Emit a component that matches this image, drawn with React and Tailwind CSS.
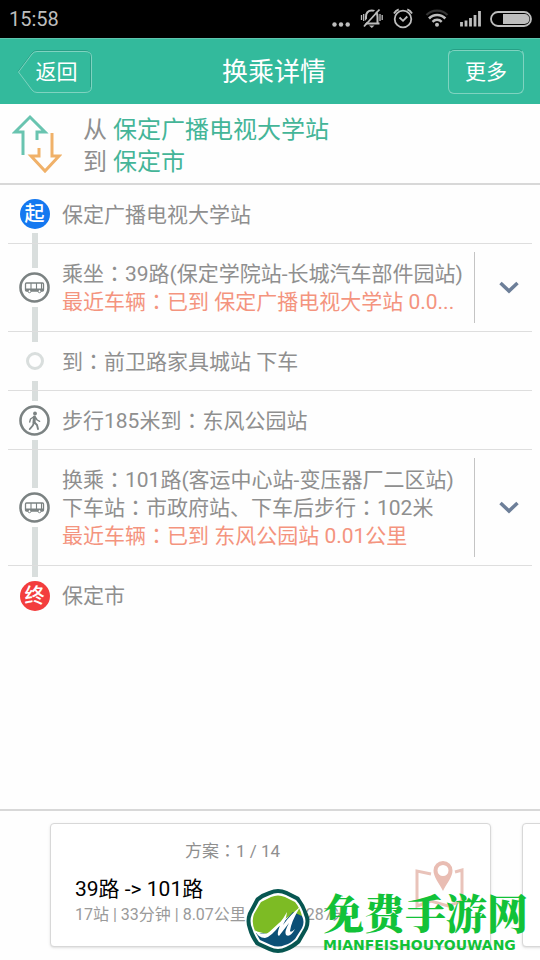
import React, { useState } from 'react'

const route = {
  from: '保定广播电视大学站',
  to: '保定市',
}

const steps = [
  { kind: 'start', lines: ['保定广播电视大学站'] },
  {
    kind: 'bus',
    lines: ['乘坐：39路(保定学院站-长城汽车部件园站)'],
    live: '最近车辆：已到 保定广播电视大学站 0.0...',
    height: 'h-[88px]',
    expandable: true,
  },
  { kind: 'stop', lines: ['到：前卫路家具城站 下车'] },
  { kind: 'walk', lines: ['步行185米到：东风公园站'] },
  {
    kind: 'bus',
    lines: ['换乘：101路(客运中心站-变压器厂二区站)', '下车站：市政府站、下车后步行：102米'],
    live: '最近车辆：已到 东风公园站 0.01公里',
    height: 'h-[116px]',
    expandable: true,
  },
  { kind: 'end', lines: ['保定市'] },
]

// Full-width colons sit in the middle of their cell only in the TC face
function Label({ children }) {
  return children.split(/(：)/).map((part, i) =>
    part === '：'
      ? <span key={i} className="leading-none font-['Noto_Sans_CJK_TC',sans-serif]">：</span>
      : part
  )
}

function StatusBar() {
  return (
    <div className="h-[38px] bg-black text-[#bdbdbd] flex items-center justify-between pl-[9px] pr-2">
      <span className="text-[20px] leading-6">15:58</span>
      <svg width="202" height="28" viewBox="330 5 202 28" fill="none" stroke="currentColor" strokeWidth="1.8" aria-hidden="true">
        <g fill="currentColor" stroke="none">
          <circle cx="334.5" cy="24.5" r="2.2"/>
          <circle cx="341" cy="24.5" r="2.2"/>
          <circle cx="347.7" cy="24.5" r="2.2"/>
        </g>
        {/* muted bell */}
        <path d="M363.500 23.500h16M366 23v-6c0-4 2.300-6.500 5.800-6.500s5.700 2.500 5.700 6.500v6" strokeWidth="2"/>
        <path d="M378 8.500L362.500 25" stroke="#000" strokeWidth="2"/>
        <path d="M379.500 9.500L364 26.500"/>
        <path d="M369 25.500h5.500l-2.700 2.500z" fill="currentColor" stroke="none"/>
        <path d="M361.500 15v5M363.700 14v7M380 14v7M382.200 15v5" strokeWidth="1.3"/>
        {/* alarm */}
        <circle cx="403" cy="19" r="8.3"/>
        <path d="M399.500 17.500l3.500 3.300 4.300-4.300"/>
        <path d="M394 13.500c1-2 2.700-3.500 4.700-4.200M412 13.500c-1-2-2.700-3.500-4.700-4.200"/>
        {/* wifi */}
        <path d="M426.500 15c5.500-5.800 15.500-5.800 21 0" stroke="#333" strokeWidth="2.2"/>
        <path d="M429 18.500c4.300-4.700 12-4.700 16.300 0" strokeWidth="2.6"/>
        <path d="M432.500 21.800c2.600-2.700 6.600-2.700 9.200 0" strokeWidth="2.4"/>
        <circle cx="437" cy="24.7" r="2" fill="currentColor" stroke="none"/>
        {/* signal */}
        <path d="M461.500 26.500v-4.500M466 26.500v-6M470.500 26.500v-8.500M475 26.500v-11.500M479.500 26.500v-15.500" strokeWidth="2.8"/>
        {/* battery */}
        <rect x="491" y="12" width="40" height="14" rx="7"/>
        <path d="M503 14h21.500a5 5 0 0 1 0 10H503z" fill="currentColor" stroke="none"/>
      </svg>
    </div>
  )
}

function TopBar() {
  return (
    <header className="h-[66px] bg-[#33ba9c] border-t border-[#5ec5ae] text-white flex items-center pl-[17px] pr-4">
      <button className="relative w-[75px] h-[45px] pl-1 text-[21px] leading-6">
        <svg className="absolute inset-0" width="75" height="45" viewBox="0 0 75 45" fill="none" aria-hidden="true">
          <path d="M1 22.500L15 4Q17 1.500 20 1.500H68Q73.500 1.500 73.500 7V38" stroke="#27a086"/>
          <path d="M1.500 23L15 41Q17 43.500 20 43.500H68Q74.500 43.500 74.500 38V8Q74.500 2.500 68 2.500H20Q17 2.500 15 5Z" stroke="#7fd3c0"/>
        </svg>
        返回
      </button>
      <h1 className="flex-1 text-center pl-2 text-[26px] leading-8">换乘详情</h1>
      <button className="w-[76px] h-[45px] rounded-md border border-[#7fd3c0] border-t-[#27a086] shadow-[inset_0_1px_0_#7fd3c0] text-[21px] leading-6">
        更多
      </button>
    </header>
  )
}

function SwapArrows() {
  return (
    <svg width="50" height="60" viewBox="0 0 50 60" fill="none" strokeWidth="3" aria-hidden="true">
      <path d="M11 41V18H3L18 3L33 18H25V26" stroke="#69c4b0"/>
      <path d="M40 19V42H47L33 57L19 42H27V34" stroke="#f0b169"/>
    </svg>
  )
}

function BusIcon() {
  return (
    <svg width="31" height="31" viewBox="0 0 31 31" fill="none" stroke="#7b8282" aria-hidden="true">
      <circle cx="15.5" cy="15.5" r="14" strokeWidth="2.6"/>
      <rect x="6.5" y="11" width="18" height="8" rx="1" strokeWidth="1.3"/>
      <path d="M12 11v6M17.500 11v6M22.500 11v6" strokeWidth="1.1"/>
      <path d="M6.500 17.700h18" strokeWidth="2.4"/>
      <circle cx="10.5" cy="19.2" r="1.5" fill="#fff"/>
      <circle cx="20.5" cy="19.2" r="1.5" fill="#fff"/>
    </svg>
  )
}

function WalkIcon() {
  return (
    <svg width="31" height="31" viewBox="0 0 31 31" fill="none" stroke="#7b8282" strokeLinecap="round" strokeLinejoin="round" aria-hidden="true">
      <circle cx="15.5" cy="15.5" r="14" strokeWidth="2.6"/>
      <circle cx="16" cy="8.5" r="1.9" fill="#7b8282" stroke="none"/>
      <path d="M15.500 12l-.5 5.500" strokeWidth="3"/>
      <path d="M14.500 12l-3 2-.8 3M16.500 12.500l1.700 2.500 2.500 1.300" strokeWidth="1.4"/>
      <path d="M15 17.500l-1.200 3-3 3.500M15.500 17.500l2.500 2.500 1 4" strokeWidth="1.9"/>
    </svg>
  )
}

function StepMarker({ kind }) {
  if (kind === 'bus') return <BusIcon/>
  if (kind === 'walk') return <WalkIcon/>
  if (kind === 'stop') {
    return (
      <span className="size-[31px] flex items-center justify-center">
        <span className="size-[18px] rounded-full border-[3px] border-[#d9dedd]"/>
      </span>
    )
  }
  return (
    <span className={`size-[30px] rounded-full flex items-center justify-center text-white text-[20px] leading-5 font-medium ${kind === 'start' ? 'bg-[#1478f0]' : 'bg-[#f33d3d]'}`}>
      {kind === 'start' ? '起' : '终'}
    </span>
  )
}

function Step({ step, first, last }) {
  const [open, setOpen] = useState(false)
  const bar = 'w-[6px] flex-1'

  return (
    <li className={`flex gap-3 pl-[11px] ${step.height || 'h-[59px]'} ${last ? '' : 'border-b border-[#dedede]'}`}>
      <div className="w-[31px] shrink-0 flex flex-col items-center gap-1">
        <span className={`${bar} ${first ? '' : 'bg-[#d9dedd]'}`}/>
        <StepMarker kind={step.kind}/>
        <span className={`${bar} ${last ? '' : 'bg-[#d9dedd]'}`}/>
      </div>
      <div className="flex-1 min-w-0 self-center pt-px text-[21px] leading-7 text-[#8f8f8f] whitespace-nowrap">
        {step.lines.map(line => (
          <p key={line}><Label>{line}</Label></p>
        ))}
        {step.live && <p className="text-[#f4947e]"><Label>{step.live}</Label></p>}
      </div>
      {step.expandable && (
        <button onClick={() => setOpen(!open)} aria-expanded={open} aria-label="展开站点"
          className="w-[58px] shrink-0 my-2 border-l border-[#c4c4c4] flex items-center pl-6">
          <svg width="20" height="14" viewBox="0 0 20 14" fill="none" stroke="#6d7f99" strokeWidth="3.5" aria-hidden="true">
            <path d="M1.500 2L10 10L18.500 2"/>
          </svg>
        </button>
      )}
    </li>
  )
}

function MapIcon() {
  return (
    <svg width="52" height="50" viewBox="0 0 52 50" fill="none" aria-hidden="true">
      <path d="M17 14L3 11V46L17 41L34 46L48 41V10L41 12" stroke="#e9c3ba" strokeWidth="3"/>
      <path fillRule="evenodd" fill="#e9bdb3" d="M29 1a9.500 9.500 0 0 0-9.500 9.500C19.500 17 25 23 29 31c4-8 9.500-14 9.500-20.500A9.500 9.500 0 0 0 29 1zm0 4a5.500 5.500 0 1 1 0 11 5.500 5.500 0 0 1 0-11z"/>
    </svg>
  )
}

function PlanCards() {
  const card = 'h-[124px] rounded border border-[#d8d8d8] bg-white shadow-sm shrink-0 basis-[90%]'
  return (
    <footer className="border-t-2 border-[#d8d8d8] pt-3 pb-[13px] pl-[50px] flex gap-[31px] overflow-hidden">
      <section className={`${card} px-6 flex items-center gap-6`}>
        <div className="flex-1 min-w-0 pb-1">
          <p className="text-[17px] leading-6 text-[#8f8f8f] text-center"><Label>方案：1 / 14</Label></p>
          <h2 className="text-[21px] leading-7 pt-3 text-black">39路 -&gt; 101路</h2>
          <p className="text-[16px] leading-6 text-[#9a9a9a] whitespace-nowrap">17站 | 33分钟 | 8.07公里 | 步行约287米</p>
        </div>
        <a href="#map" aria-label="地图"><MapIcon/></a>
      </section>
      <section className={card}/>
    </footer>
  )
}

function Watermark() {
  return (
    <div className="absolute right-3 bottom-[5px] flex items-center gap-3 text-[#12c238] pointer-events-none">
      <svg width="66" height="68" viewBox="0 0 66 68" aria-hidden="true">
        <path d="M24 4Q33 0 42 4L54 10Q60 18 63 27Q66 34 63 42L55 56Q48 62 42 64Q33 68 24 64L11 58Q5 50 3 42Q0 34 3 26L11 11Q17 6 24 4Z" fill="#075651"/>
        <path d="M25 8Q33 4 41 8L51 13Q57 20 59 28Q62 34 59 41L52 53Q46 58 41 60Q33 64 25 60L14 55Q9 48 7 41Q4 34 7 27L14 14Q19 10 25 8Z" fill="#fff"/>
        <path d="M26 10Q33 7 40 10L50 15Q55 21 57 29L46 28L34 36L22 47L10 44Q6 35 9 27L16 15Z" fill="#7dbb24"/>
        <path d="M57 29Q60 35 57 41L50 52Q45 57 40 58Q33 61 26 58L15 53L11 46L24 47L37 37L48 25Z" fill="#0b5076"/>
        <path d="M10 43Q17 50 25 45Q35 38 42 25Q41 33 38 38Q46 27 55 20Q46 35 45 44Q46 46 50 42Q45 51 41 48Q39 45 44 36L34 49Q31 49 35 38Q26 50 20 51Q13 51 10 43Z" fill="#fff"/>
      </svg>
      <div>
        <p className="text-[41px] leading-[48px] font-black font-['Noto_Serif_CJK_SC','Noto_Sans_CJK_SC',serif]">免费手游网</p>
        <p className="text-[14px] leading-[18px] font-bold font-['DejaVu_Sans',sans-serif]">MIANFEISHOUYOUWANG</p>
      </div>
    </div>
  )
}

export default function App() {
  return (
    <div className="relative min-h-screen flex flex-col bg-[#fefefe] overflow-hidden font-[Roboto,'Noto_Sans_CJK_SC',sans-serif]">
      <StatusBar/>
      <TopBar/>
      <section className="h-[81px] border-b-2 border-[#d8d8d8] flex items-center pl-3 gap-[21px]">
        <SwapArrows/>
        <div className="pt-1 text-[24px] leading-8 text-[#8f8f8f]">
          <p>从 <span className="text-[#44b598]">{route.from}</span></p>
          <p>到 <span className="text-[#44b598]">{route.to}</span></p>
        </div>
      </section>
      <ul className="flex-1 mx-2">
        {steps.map((step, i) => (
          <Step key={i} step={step} first={i === 0} last={i === steps.length - 1}/>
        ))}
      </ul>
      <PlanCards/>
      <Watermark/>
    </div>
  )
}
